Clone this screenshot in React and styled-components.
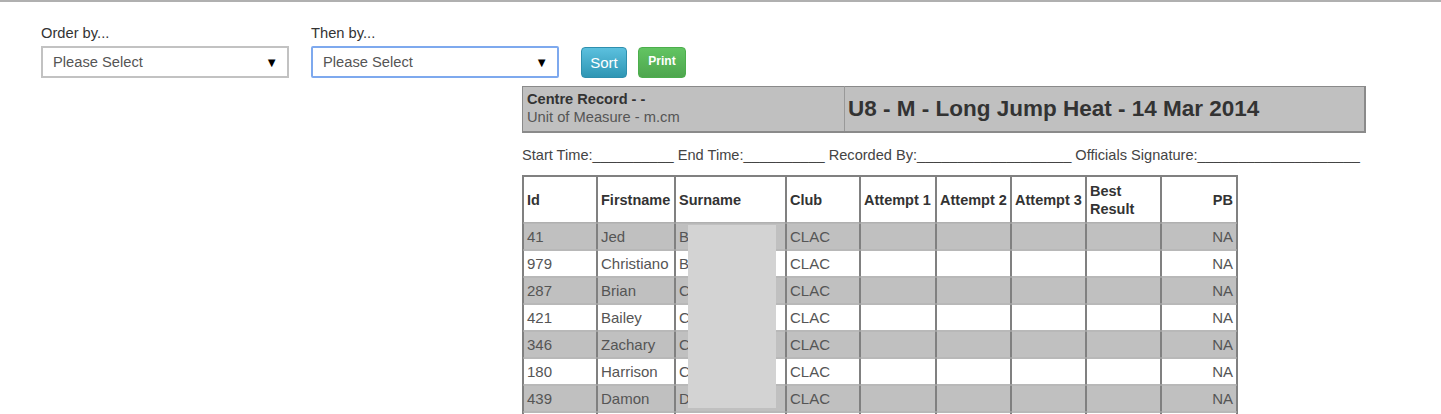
import React from 'react'
import styled, { createGlobalStyle } from 'styled-components'

const GlobalStyle = createGlobalStyle`
  body {
    margin: 0;
    font-family: "Liberation Sans", Arial, sans-serif;
    background: #fff;
    color: #333;
  }
`

const Page = styled.div`
  border-top: 2px solid #b0b0b0;
  height: 412px;
  overflow: hidden;
`

const FilterRow = styled.div`
  display: flex;
  align-items: flex-end;
  padding: 21px 0 0 41px;
`

const FilterGroup = styled.div`
  display: flex;
  flex-direction: column;
  margin-right: 22px;
`

const FilterLabel = styled.label`
  font-size: 14.7px;
  line-height: 20px;
  color: #333;
  margin-bottom: 3px;
`

const SelectBox = styled.div`
  box-sizing: border-box;
  width: 248px;
  height: 32px;
  border: 2px solid ${p => (p.focused ? '#7ea9ee' : '#c2c2c2')};
  border-radius: ${p => (p.focused ? '2px' : '0')};
  display: flex;
  align-items: center;
  justify-content: space-between;
  padding: 0 9px 0 10px;
  font-size: 14.7px;
  color: #555;
`

const Arrow = styled.span`
  font-size: 13px;
  color: #000;
`

const Button = styled.button`
  box-sizing: border-box;
  height: 31px;
  border-radius: 4px;
  border: 1px solid ${p => (p.variant === 'green' ? '#4cae4c' : '#2e8fae')};
  background: ${p =>
    p.variant === 'green'
      ? 'linear-gradient(#62c462, #4ea64e)'
      : 'linear-gradient(#5bc0de, #2f96b4)'};
  color: #fff;
  font-family: "Liberation Sans", Arial, sans-serif;
  font-size: ${p => (p.small ? '12px' : '15px')};
  font-weight: ${p => (p.small ? 'bold' : 'normal')};
  padding: 0;
  width: ${p => p.w}px;
  margin-right: 11px;
  padding-bottom: ${p => (p.small ? '4px' : '0')};
`

const Results = styled.div`
  margin: 8px 0 0 522px;
  position: relative;
`

const TitleTable = styled.table`
  width: 844px;
  border-collapse: collapse;
  background: #c0c0c0;
  border-top: 1px solid #8a8a8a;
  border-left: 1px solid #8a8a8a;
  border-right: 2px solid #8a8a8a;
  border-bottom: 2px solid #8a8a8a;
`

const TitleInfo = styled.td`
  width: 313px;
  height: 44px;
  padding: 0 4px;
  border-right: 1px solid #999;
  vertical-align: middle;
`

const InfoBold = styled.div`
  font-size: 14.6px;
  font-weight: bold;
  color: #333;
  line-height: 17px;
`

const InfoText = styled.div`
  font-size: 14.7px;
  color: #555;
  line-height: 19px;
`

const TitleHeading = styled.td`
  font-size: 22.5px;
  font-weight: bold;
  color: #333;
  padding: 0 3px;
  vertical-align: middle;
  white-space: nowrap;
`

const SignLine = styled.div`
  font-size: 14.6px;
  line-height: 20px;
  color: #444;
  margin: 12px 0 10px 0;
  white-space: nowrap;
`

const ResultTable = styled.table`
  border-collapse: separate;
  border-spacing: 0;
  border: 1px solid #808080;
  table-layout: fixed;
  width: 715px;
`

const HeadCell = styled.th`
  box-sizing: border-box;
  height: 47px;
  border: 1px solid #808080;
  border-bottom-color: #b0b0b0;
  padding: 0 3px;
  font-size: 14.5px;
  font-weight: bold;
  color: #333;
  text-align: ${p => (p.right ? 'right' : 'left')};
  vertical-align: middle;
  line-height: 18px;
  white-space: ${p => (p.wrap ? 'normal' : 'nowrap')};
  overflow: hidden;
`

const Row = styled.tr`
  background: ${p => (p.shaded ? '#c0c0c0' : '#fff')};
`

const Cell = styled.td`
  box-sizing: border-box;
  height: 27px;
  border-left: 1px solid #808080;
  border-right: 1px solid #808080;
  border-top: 1px solid #b8b8b8;
  border-bottom: 1px solid #b8b8b8;
  padding: 0 3px 1px;
  font-size: 15px;
  color: #555;
  text-align: ${p => (p.right ? 'right' : 'left')};
  white-space: nowrap;
  overflow: hidden;
`

const Redaction = styled.div`
  position: absolute;
  left: 166px;
  top: 139px;
  width: 88px;
  height: 183px;
  background: #d3d3d3;
`

const columns = [
  { title: 'Id', width: 74 },
  { title: 'Firstname', width: 78 },
  { title: 'Surname', width: 111 },
  { title: 'Club', width: 74 },
  { title: 'Attempt 1', width: 76 },
  { title: 'Attempt 2', width: 75 },
  { title: 'Attempt 3', width: 75 },
  { title: 'Best Result', width: 75, wrap: true },
  { title: 'PB', width: 76, right: true }
]

const athletes = [
  ['41', 'Jed', 'B'],
  ['979', 'Christiano', 'B'],
  ['287', 'Brian', 'C'],
  ['421', 'Bailey', 'C'],
  ['346', 'Zachary', 'C'],
  ['180', 'Harrison', 'C'],
  ['439', 'Damon', 'D'],
  ['512', 'Ethan', 'D']
]

const App = () => (
  <Page>
    <GlobalStyle />
    <FilterRow>
      <FilterGroup>
        <FilterLabel>Order by...</FilterLabel>
        <SelectBox>
          <span>Please Select</span>
          <Arrow>▼</Arrow>
        </SelectBox>
      </FilterGroup>
      <FilterGroup>
        <FilterLabel>Then by...</FilterLabel>
        <SelectBox focused>
          <span>Please Select</span>
          <Arrow>▼</Arrow>
        </SelectBox>
      </FilterGroup>
      <Button w={46}>Sort</Button>
      <Button w={48} variant="green" small>Print</Button>
    </FilterRow>
    <Results>
      <TitleTable>
        <tbody>
          <tr>
            <TitleInfo>
              <InfoBold>Centre Record - -</InfoBold>
              <InfoText>Unit of Measure - m.cm</InfoText>
            </TitleInfo>
            <TitleHeading>U8 - M - Long Jump Heat - 14 Mar 2014</TitleHeading>
          </tr>
        </tbody>
      </TitleTable>
      <SignLine>
        Start Time:__________ End Time:__________ Recorded By:___________________ Officials Signature:____________________
      </SignLine>
      <ResultTable>
        <colgroup>
          {columns.map(c => <col key={c.title} style={{ width: c.width }} />)}
        </colgroup>
        <thead>
          <tr>
            {columns.map(c => (
              <HeadCell key={c.title} right={c.right} wrap={c.wrap}>{c.title}</HeadCell>
            ))}
          </tr>
        </thead>
        <tbody>
          {athletes.map((a, i) => (
            <Row key={a[0]} shaded={i % 2 === 0}>
              <Cell>{a[0]}</Cell>
              <Cell>{a[1]}</Cell>
              <Cell>{a[2]}</Cell>
              <Cell>CLAC</Cell>
              <Cell />
              <Cell />
              <Cell />
              <Cell />
              <Cell right>NA</Cell>
            </Row>
          ))}
        </tbody>
      </ResultTable>
      <Redaction />
    </Results>
  </Page>
)

export default App
